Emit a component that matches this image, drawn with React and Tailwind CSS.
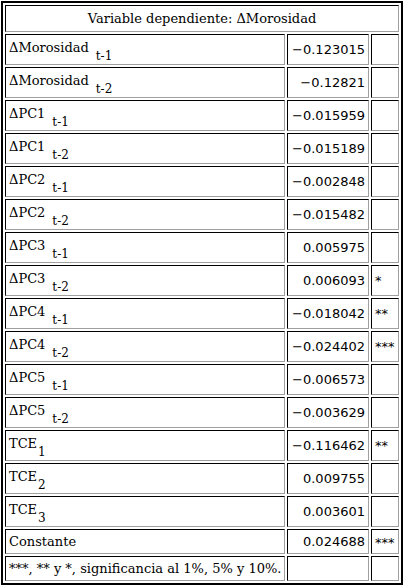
const rows = [
  { name: 'ΔMorosidad', sub: 't-1', gap: true, value: '−0.123015', sig: '' },
  { name: 'ΔMorosidad', sub: 't-2', gap: true, value: '−0.12821', sig: '' },
  { name: 'ΔPC1', sub: 't-1', gap: true, value: '−0.015959', sig: '' },
  { name: 'ΔPC1', sub: 't-2', gap: true, value: '−0.015189', sig: '' },
  { name: 'ΔPC2', sub: 't-1', gap: true, value: '−0.002848', sig: '' },
  { name: 'ΔPC2', sub: 't-2', gap: true, value: '−0.015482', sig: '' },
  { name: 'ΔPC3', sub: 't-1', gap: true, value: '0.005975', sig: '' },
  { name: 'ΔPC3', sub: 't-2', gap: true, value: '0.006093', sig: '*' },
  { name: 'ΔPC4', sub: 't-1', gap: true, value: '−0.018042', sig: '**' },
  { name: 'ΔPC4', sub: 't-2', gap: true, value: '−0.024402', sig: '***' },
  { name: 'ΔPC5', sub: 't-1', gap: true, value: '−0.006573', sig: '' },
  { name: 'ΔPC5', sub: 't-2', gap: true, value: '−0.003629', sig: '' },
  { name: 'TCE', sub: '1', gap: false, value: '−0.116462', sig: '**' },
  { name: 'TCE', sub: '2', gap: false, value: '0.009755', sig: '' },
  { name: 'TCE', sub: '3', gap: false, value: '0.003601', sig: '' },
]

const cell = 'border border-t-black border-l-black border-r-[#a0a0a0] border-b-[#a0a0a0] px-[3px] p-0'
const serif = "font-['DejaVu_Serif',serif] text-[13px]"
const sans = "font-['DejaVu_Sans',sans-serif] text-[13px]"

export default function App() {
  return (
    <div className="bg-white w-[405px] h-[588px] pt-px pl-px">
      <table className="table-fixed border-separate border-spacing-[2px] border-2 border-black w-[402px] text-black leading-none">
        <colgroup>
          <col className="w-[280px]" />
          <col className="w-[82px]" />
          <col className="w-[28px]" />
        </colgroup>
        <tbody>
          <tr>
            <td colSpan={3} className={`${cell} ${serif} h-[27px] text-center`}>
              Variable dependiente: ΔMorosidad
            </td>
          </tr>
          {rows.map((r, i) => (
            <tr key={i}>
              <td className={`${cell} ${serif} h-[31px] align-middle`}>
                <span className="relative -top-[2px]">
                  {r.name}
                  <span className={`relative top-[8px] text-[12px] ${r.gap ? 'ml-[7px]' : 'ml-px'}`}>{r.sub}</span>
                </span>
              </td>
              <td className={`${cell} ${sans} text-right align-middle`}>{r.value}</td>
              <td className={`${cell} ${sans} text-[8px] align-top pt-[8px]`}>{r.sig}</td>
            </tr>
          ))}
          <tr>
            <td className={`${cell} ${serif} h-[25px]`}>Constante</td>
            <td className={`${cell} ${sans} text-right`}>0.024688</td>
            <td className={`${cell} ${sans} text-[8px] align-top pt-[6px]`}>***</td>
          </tr>
          <tr>
            <td className={`${cell} ${serif} h-[25px] whitespace-nowrap`}>***, ** y *, significancia al 1%, 5% y 10%.</td>
            <td className={cell}></td>
            <td className={cell}></td>
          </tr>
        </tbody>
      </table>
    </div>
  )
}
